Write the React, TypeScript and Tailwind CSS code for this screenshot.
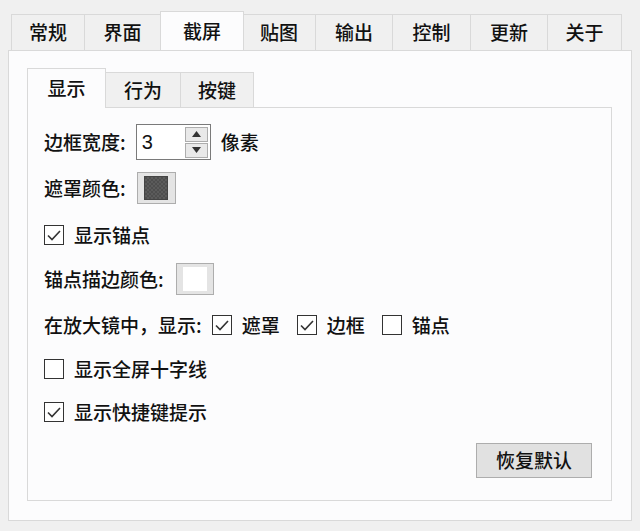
import { ReactNode } from 'react'

const font = { fontFamily: '"Noto Sans CJK SC", "Noto Sans", sans-serif' }

function OuterTab({ label, width, active = false }: { label: string; width: string; active?: boolean }) {
  return (
    <div
      className={`flex items-center justify-center border border-[#d9d9d9] text-[19px] ${width} ${
        active ? 'relative z-10 -mx-[1px] h-[39px] border-b-0 bg-[#fcfcfd]' : 'h-[36px] -ml-px first:ml-0 bg-[#f0f0f0] border-b-0'
      }`}
    >
      {label}
    </div>
  )
}

function InnerTab({ label, width, active = false }: { label: string; width: string; active?: boolean }) {
  return (
    <div
      className={`flex items-center justify-center border border-[#d9d9d9] border-b-0 text-[19px] ${width} ${
        active ? 'relative z-10 h-[40px] bg-[#fcfcfd] pb-px' : 'h-[36px] -ml-px bg-[#f0f0f0]'
      }`}
    >
      {label}
    </div>
  )
}

function Check({ checked }: { checked: boolean }) {
  return (
    <div className="flex h-[20px] w-[20px] shrink-0 items-center justify-center border-[1.5px] border-[#333] bg-white">
      {checked && (
        <svg width="14" height="11" viewBox="0 0 14 11" fill="none">
          <path d="M1 5.5 L5 9.5 L13 1" stroke="#333" strokeWidth="1.6" />
        </svg>
      )}
    </div>
  )
}

function CheckRow({ checked, children, className = '' }: { checked: boolean; children: ReactNode; className?: string }) {
  return (
    <div className={`flex h-[24px] items-center gap-[10px] ${className}`}>
      <Check checked={checked} />
      <span>{children}</span>
    </div>
  )
}

export default function App() {
  return (
    <div style={font} className="h-[531px] w-[640px] overflow-hidden bg-[#f0f0f0] text-[19px] font-medium text-[#111]">
      <div className="flex h-[50px] items-end pl-[11px]">
        <OuterTab label="常规" width="w-[74px]" />
        <OuterTab label="界面" width="w-[77px]" />
        <OuterTab label="截屏" width="w-[84px]" active />
        <OuterTab label="贴图" width="w-[74px]" />
        <OuterTab label="输出" width="w-[78px]" />
        <OuterTab label="控制" width="w-[79px]" />
        <OuterTab label="更新" width="w-[78px]" />
        <OuterTab label="关于" width="w-[75px]" />
      </div>

      {/* outer panel */}
      <div className="ml-[8px] flex h-[471px] w-[624px] flex-col border border-[#d9d9d9] bg-[#fcfcfd] pl-[18px] pr-[19px] pt-[17px]">
        <div className="flex items-end">
          <InnerTab label="显示" width="w-[79px]" active />
          <InnerTab label="行为" width="w-[76px]" />
          <InnerTab label="按键" width="w-[74px]" />
        </div>

        {/* inner panel */}
        <div className="-mt-px flex h-[394px] flex-col border border-[#d9d9d9] bg-[#fcfcfd] pl-[16px] pr-[19px] pt-[16px]">
          <div className="flex h-[36px] items-center">
            <span>边框宽度:</span>
            <div className="ml-[10px] flex h-[36px] w-[75px] items-center border border-[#7a7a7a] bg-white pl-[5px] pr-[2px]">
              <span className="flex-1 text-[20px] font-normal leading-none" style={{ fontFamily: '"Liberation Sans", sans-serif' }}>
                3
              </span>
              <div className="flex flex-col gap-px">
                <div className="flex h-[15px] w-[23px] items-center justify-center border border-[#adadad] bg-[#e9e9e9]">
                  <svg width="9" height="6" viewBox="0 0 9 6">
                    <path d="M0 6 L4.5 0 L9 6 Z" fill="#333" />
                  </svg>
                </div>
                <div className="flex h-[15px] w-[23px] items-center justify-center border border-[#adadad] bg-[#e9e9e9]">
                  <svg width="9" height="6" viewBox="0 0 9 6">
                    <path d="M0 0 L4.5 6 L9 0 Z" fill="#333" />
                  </svg>
                </div>
              </div>
            </div>
            <span className="ml-[10px]">像素</span>
          </div>

          <div className="mt-[12px] flex h-[32px] items-center">
            <span>遮罩颜色:</span>
            <div className="ml-[11px] flex h-[32px] w-[39px] items-center justify-center border border-[#adadad] bg-[#e4e4e4]">
              <div className="h-[24px] w-[24px] border border-[#444] bg-[repeating-conic-gradient(#5b5b5b_0%_25%,#4e4e4e_0%_50%)] bg-[length:4px_4px]" />
            </div>
          </div>

          <CheckRow checked className="mt-[19px]">
            显示锚点
          </CheckRow>

          <div className="mt-[16px] flex h-[32px] items-center">
            <span>锚点描边颜色:</span>
            <div className="ml-[12px] flex h-[32px] w-[38px] items-center justify-center border border-[#adadad] bg-[#e4e4e4]">
              <div className="h-[24px] w-[24px] bg-white" />
            </div>
          </div>

          <div className="mt-[18px] flex h-[24px] items-center">
            <span>在放大镜中，显示:</span>
            <CheckRow checked className="ml-[10px]">
              遮罩
            </CheckRow>
            <CheckRow checked className="ml-[17px]">
              边框
            </CheckRow>
            <CheckRow checked={false} className="ml-[17px]">
              锚点
            </CheckRow>
          </div>

          <CheckRow checked={false} className="mt-[20px]">
            显示全屏十字线
          </CheckRow>

          <CheckRow checked className="mt-[19px]">
            显示快捷键提示
          </CheckRow>

          <div className="mt-[19px] flex justify-end">
            <button className="flex h-[35px] w-[116px] items-center justify-center border border-[#adadad] bg-[#e1e1e1] text-[19px] font-medium text-[#111]">
              恢复默认
            </button>
          </div>
        </div>
      </div>
    </div>
  )
}
